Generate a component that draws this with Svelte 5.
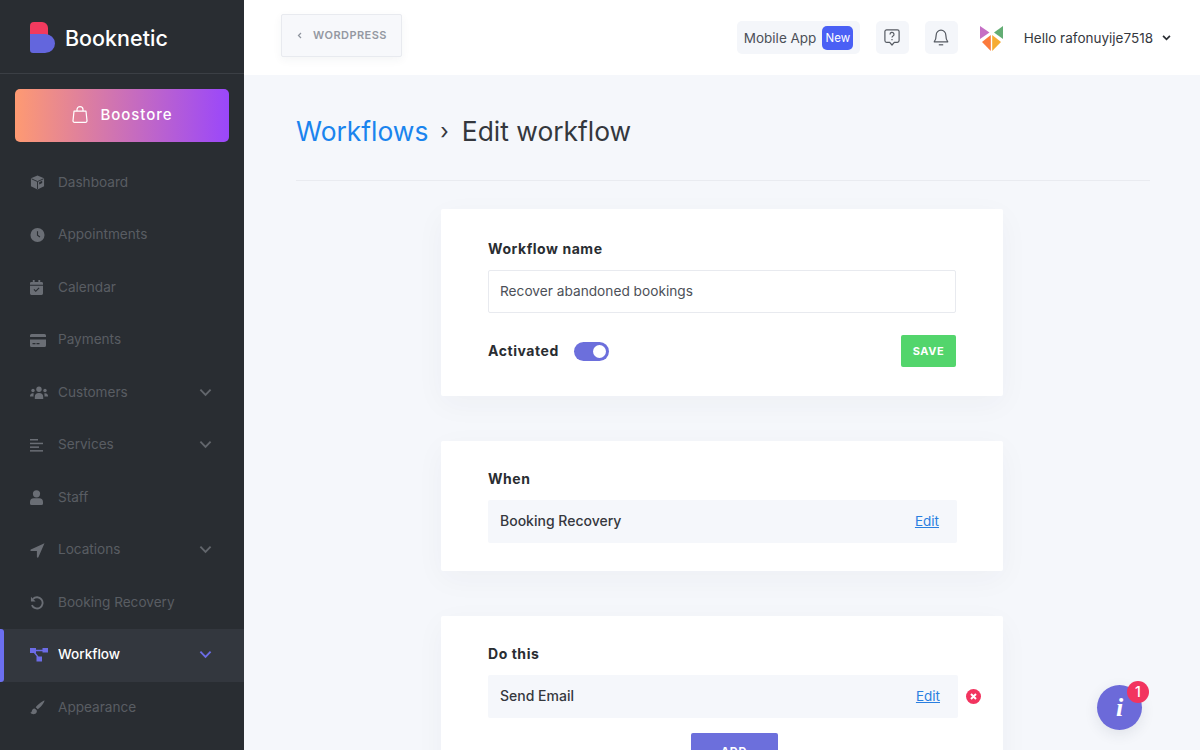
<script>
  const menu = [
    { label: 'Dashboard', icon: 'box' },
    { label: 'Appointments', icon: 'clock' },
    { label: 'Calendar', icon: 'cal' },
    { label: 'Payments', icon: 'card' },
    { label: 'Customers', icon: 'users', more: true },
    { label: 'Services', icon: 'list', more: true },
    { label: 'Staff', icon: 'user' },
    { label: 'Locations', icon: 'nav', more: true },
    { label: 'Booking Recovery', icon: 'undo' },
    { label: 'Workflow', icon: 'flow', more: true, active: true },
    { label: 'Appearance', icon: 'brush' }
  ];
</script>

<div class="page">
  <aside class="side">
    <div class="brand">
      <svg class="logo" viewBox="0 0 25 31" width="25" height="31">
        <path d="M0 4a4 4 0 0 1 4-4h8a6 6 0 0 1 6 6v7H0z" fill="#f23a5e"/>
        <path d="M0 12h15a10 9.500 0 0 1 0 19H3a3 3 0 0 1-3-3z" fill="#6366dd"/>
      </svg>
      <span class="brand-name">Booknetic</span>
    </div>
    <div class="store-wrap">
      <button class="store">
        <svg viewBox="0 0 16 17" width="16" height="17" fill="none" stroke="#fff" stroke-width="1.200">
          <path d="M2 5.200h12l1 9.400a1.600 1.600 0 0 1-1.600 1.800H2.600A1.600 1.600 0 0 1 1 14.600z" stroke-linejoin="round"/>
          <path d="M5 5V3.600a3 3 0 0 1 6 0V5"/>
        </svg>
        <span>Boostore</span>
      </button>
    </div>
    <nav class="menu">
      {#each menu as m}
        <div class="item" class:active={m.active}>
          <span class="ico">
            {#if m.icon === 'box'}
              <svg viewBox="0 0 16 16" width="15" height="15"><path d="M8 .5 15 3.500v8.500L8 15.500 1 12V3.500z" fill="currentColor"/><path d="M1.500 4 8 7l6.500-3M8 7v8" fill="none" stroke="#292d32" stroke-width="1"/><path d="M9.800 7.600 13 6.200v2.400L9.800 10z" fill="#292d32"/></svg>
            {:else if m.icon === 'clock'}
              <svg viewBox="0 0 16 16" width="15" height="15"><circle cx="8" cy="7.500" r="7.500" fill="currentColor"/><path d="M8 3.500v4.300l2.600 1.800" fill="none" stroke="#292d32" stroke-width="1.200"/></svg>
            {:else if m.icon === 'cal'}
              <svg viewBox="0 0 14 16" width="13" height="15"><path fill-rule="evenodd" d="M3 0h2v2h4V0h2v2h1.500A1.500 1.500 0 0 1 14 3.500V5H0V3.500A1.500 1.500 0 0 1 1.500 2H3zM0 6h14v8.500a1.500 1.500 0 0 1-1.500 1.500h-11A1.500 1.500 0 0 1 0 14.500zM3.800 10.500l2.400 2.400 4-4-.9-.9-3.100 3.100-1.500-1.500z" fill="currentColor"/></svg>
            {:else if m.icon === 'card'}
              <svg viewBox="0 0 16 13" width="16" height="13"><path fill-rule="evenodd" d="M1.500 0h13A1.500 1.500 0 0 1 16 1.500V3H0V1.500A1.500 1.500 0 0 1 1.500 0zM0 5.500h16v6A1.500 1.500 0 0 1 14.500 13h-13A1.500 1.500 0 0 1 0 11.500zM2.500 9v1.200h3V9zM6.500 9v1.200h3V9z" fill="currentColor"/></svg>
            {:else if m.icon === 'users'}
              <svg viewBox="0 0 18 13" width="18" height="13"><g fill="currentColor"><circle cx="9" cy="3.200" r="2.700"/><circle cx="3" cy="4.500" r="1.700"/><circle cx="15" cy="4.500" r="1.700"/><path d="M4.800 13v-2a4.200 4 0 0 1 8.400 0v2zM0 10.200a2.800 2.800 0 0 1 3.800-2.800A6 6 0 0 0 3.600 10.600H0zM18 10.200a2.800 2.800 0 0 0-3.800-2.800 6 6 0 0 1 .2 3.200H18z"/></g></svg>
            {:else if m.icon === 'list'}
              <svg viewBox="0 0 13 13" width="13" height="13"><g fill="currentColor"><rect width="8" height="1.500" y="0"/><rect width="13" height="1.500" y="3.700"/><rect width="9" height="1.500" y="7.400"/><rect width="13" height="1.500" y="11.100"/></g></svg>
            {:else if m.icon === 'user'}
              <svg viewBox="0 0 13 15" width="13" height="15"><g fill="currentColor"><circle cx="6.500" cy="3.800" r="3.600"/><path d="M0 13.400V12a3.800 3.800 0 0 1 3.800-3.800h5.400A3.800 3.800 0 0 1 13 12v1.400A1.500 1.500 0 0 1 11.500 15h-10A1.500 1.500 0 0 1 0 13.400z"/></g></svg>
            {:else if m.icon === 'nav'}
              <svg viewBox="0 0 15 15" width="15" height="15"><path d="M14.500.2.800 6.600c-.8.4-.5 1.500.3 1.500h5.800v5.800c0 .8 1.100 1.100 1.500.3z" fill="currentColor"/></svg>
            {:else if m.icon === 'undo'}
              <svg viewBox="0 0 15 15" width="14" height="14" fill="none" stroke="currentColor" stroke-width="2"><path d="M3.200 3.200A6 6 0 1 1 2 9.800"/><path d="M1 .8 1 6h5z" fill="currentColor" stroke="none"/></svg>
            {:else if m.icon === 'flow'}
              <svg viewBox="0 0 18 14" width="18" height="14"><g fill="currentColor"><rect width="6" height="5"/><rect x="12.500" width="5.500" height="4.500"/><rect x="6.500" y="8.500" width="5.500" height="5"/></g><path d="M5 2.500h8M4 4l4 5" stroke="currentColor" stroke-width="1.300" fill="none"/></svg>
            {:else if m.icon === 'brush'}
              <svg viewBox="0 0 15 15" width="15" height="15"><path d="M14.600.4C12 1 7.500 4.500 5.700 7.300l2 2C10.500 7.500 14 3 14.600.4zM4.700 8.400C2.600 8.500 2 10 1.700 11.400c-.2.800-.7 1-1.400 1.200C1.500 14.500 5 15 6.400 12.800c.7-1.100.5-2.200.1-2.700z" fill="currentColor"/></svg>
            {/if}
          </span>
          <span class="label">{m.label}</span>
          {#if m.more}
            <svg class="chev" viewBox="0 0 14 9" width="13" height="9"><path d="M1.500 1.500 7 7l5.500-5.500" fill="none" stroke="currentColor" stroke-width="2"/></svg>
          {/if}
        </div>
      {/each}
    </nav>
  </aside>

  <div class="right">
    <header class="top">
      <button class="back">
        <svg viewBox="0 0 6 8" width="5" height="7"><path d="M4.800 1 1.800 4l3 3" fill="none" stroke="#8f949e" stroke-width="1.500"/></svg>
        <span>WORDPRESS</span>
      </button>
      <div class="top-right">
        <div class="mobile">
          <span>Mobile App</span>
          <span class="new">New</span>
        </div>
        <div class="sq">
          <svg viewBox="0 0 16 17" width="16" height="17" fill="none" stroke="#555a62" stroke-width="1.200"><path d="M2.600.9h10.800a1.700 1.700 0 0 1 1.700 1.700v9a1.700 1.700 0 0 1-1.700 1.700h-3.100L8 16l-2.300-2.700H2.600A1.700 1.700 0 0 1 .9 11.600v-9A1.700 1.700 0 0 1 2.600.9z" stroke-linejoin="round"/><path d="M6 5.400a2 2 0 1 1 3 1.700c-.7.400-1 .8-1 1.500M8 10v1.200"/></svg>
        </div>
        <div class="sq">
          <svg viewBox="0 0 16 17" width="16" height="17" fill="none" stroke="#555a62" stroke-width="1.200"><path d="M8 1.200a4.800 4.800 0 0 1 4.800 4.800c0 4 .8 5.200 2 6.800H1.200c1.200-1.600 2-2.800 2-6.800A4.800 4.800 0 0 1 8 1.200z" stroke-linejoin="round"/><path d="M5.800 15.800h4.400"/></svg>
        </div>
        <svg class="avatar" viewBox="0 0 24 26" width="24" height="26">
          <path d="M0 1 9.500 7.500 0 14z" fill="#c56fc5"/>
          <path d="M23 1V14L14 7.500z" fill="#63ad74"/>
          <path d="M10.800 10 2 17l8.800 9z" fill="#fb7a3c"/>
          <path d="M12.200 10 21 17l-8.800 9z" fill="#f6ac32"/>
        </svg>
        <div class="hello">
          <span>Hello rafonuyije7518</span>
          <svg viewBox="0 0 10 7" width="9" height="6"><path d="M1 1 5 5l4-4" fill="none" stroke="#2a2d33" stroke-width="2"/></svg>
        </div>
      </div>
    </header>

    <main class="main">
      <div class="title">
        <span class="crumb">Workflows</span>
        <span class="sep">›</span>
        <span>Edit workflow</span>
      </div>
      <div class="rule"></div>

      <section class="card first">
        <div class="lab">Workflow name</div>
        <div class="input">Recover abandoned bookings</div>
        <div class="act">
          <span class="lab">Activated</span>
          <span class="toggle"><i></i></span>
          <button class="save">SAVE</button>
        </div>
      </section>

      <section class="card when">
        <div class="lab">When</div>
        <div class="row"><span>Booking Recovery</span><span class="edit">Edit</span></div>
      </section>

      <section class="card dothis">
        <div class="lab">Do this</div>
        <div class="row-wrap">
          <div class="row wide"><span>Send Email</span><span class="edit">Edit</span></div>
          <svg class="del" viewBox="0 0 15 15" width="15" height="15"><circle cx="7.500" cy="7.500" r="7.500" fill="#f2345f"/><path d="M5 5l5 5M10 5l-5 5" stroke="#fff" stroke-width="2"/></svg>
        </div>
        <div class="add-wrap"><button class="add">ADD</button></div>
      </section>
    </main>
  </div>

  <div class="fab">
    <span class="i">i</span>
    <span class="badge">1</span>
  </div>
</div>

<style>
  :global(body) { margin: 0; background: #f5f7fb; }
  .page {
    display: flex; width: 1200px; height: 750px; overflow: hidden; position: relative;
    font-family: Inter, "Noto Sans", sans-serif; color: #292d32;
  }
  .side { width: 244px; flex: none; background: #292d32; }
  .brand {
    height: 73px; border-bottom: 1px solid #3b3f45; display: flex; align-items: center;
    padding-left: 30px; gap: 10px;
  }
  .logo { margin-top: 1px; }
  .brand-name { color: #fff; font-size: 21.500px; font-weight: 500; margin-top: 3px; }
  .store-wrap { padding: 15px 15px 0; }
  .store {
    width: 214px; height: 53px; border: 0; border-radius: 5px; display: flex; align-items: center;
    justify-content: center; gap: 13px; color: #fff; font: 500 15px Inter, sans-serif; letter-spacing: .95px;
    background: linear-gradient(90deg, #fe9a72, #9a47fb); padding: 0 0 2px;
  }
  .menu { padding-top: 14.500px; }
  .item {
    height: 52.500px; display: flex; align-items: center; padding-left: 30px; position: relative;
    font-size: 13.600px;
  }
  .ico { width: 28px; flex: none; display: flex; align-items: center; color: #6a6e75; }
  .label { color: #595d63; margin-bottom: 2px; }
  .chev { position: absolute; left: 199px; top: 21px; color: #62666c; }
  .item.active { background: #33373e; }
  .item.active::before {
    content: ""; position: absolute; left: 0; top: 0; bottom: 0; width: 4px; background: #6c6ff0;
    border-radius: 0 3px 3px 0;
  }
  .item.active .ico, .item.active .chev { color: #6c6ce6; }
  .item.active .label { color: #fff; font-weight: 500; }

  .right { flex: 1; min-width: 0; display: flex; flex-direction: column; }
  .top {
    height: 75px; background: #fff; flex: none; display: flex; align-items: center;
    justify-content: space-between; padding: 0 29px 0 37px;
  }
  .back {
    width: 121px; height: 43px; margin-top: -5px; box-sizing: border-box; background: #f7f8fb;
    border: 1px solid #e8eaef; border-radius: 2px; display: flex; align-items: center; padding: 0 0 0 15px;
    gap: 11px; box-shadow: 0 3px 10px rgba(40, 50, 80, .05);
    color: #9498a2; font: 600 11px Inter, sans-serif; letter-spacing: .45px;
  }
  .top-right { display: flex; align-items: center; }
  .mobile {
    height: 33px; width: 123px; box-sizing: border-box; background: #f4f6fa; border-radius: 5px;
    display: flex; align-items: center; padding-left: 7px; gap: 6px; font-size: 13.500px; color: #4c5058;
  }
  .new {
    background: #4a60f5; color: #fff; font-size: 11.500px; width: 31px; height: 24px; border-radius: 5px;
    display: flex; align-items: center; justify-content: center;
  }
  .sq {
    width: 33px; height: 33px; background: #f4f6fa; border-radius: 5px; margin-left: 16px;
    display: flex; align-items: center; justify-content: center;
  }
  .avatar { margin-left: 22px; }
  .hello {
    margin-left: 20px; display: flex; align-items: center; gap: 9px; font-size: 13.500px; color: #35383e;
  }

  .main { padding: 0 50px 0 52px; flex: 1; min-height: 0; }
  .title { margin-top: 36px; height: 40px; font-size: 26.400px; line-height: 40px; color: #34373d; display: flex; }
  .crumb { color: #1a84ee; }
  .sep { margin: 0 13px 0 12px; font-size: 22px; }
  .rule { height: 1px; background: #e9ebf0; margin-top: 29px; }
  .card {
    width: 562px; box-sizing: border-box; background: #fff; border-radius: 2px;
    padding: 0 47px; box-shadow: 0 8px 30px rgba(40, 50, 80, .04); margin-left: 145px;
  }
  .first { margin-top: 28px; height: 187px; padding-top: 30px; }
  .when { margin-top: 45px; height: 130px; padding-top: 28px; }
  .dothis { margin-top: 45px; height: 200px; padding-top: 28px; }
  .lab { font-size: 14px; font-weight: 700; line-height: 20px; color: #292d32; letter-spacing: .55px; }
  .input {
    width: 468px; height: 43px; box-sizing: border-box; margin-top: 11px; border: 1px solid #e8eaef;
    border-radius: 2px; display: flex; align-items: center; padding: 0 0 2px 11px; font-size: 13.700px; color: #4c5058;
  }
  .act { display: flex; align-items: center; margin-top: 22px; width: 468px; height: 32px; }
  .toggle {
    width: 35px; height: 19px; margin-left: 15px; background: #6c6fdc; border-radius: 10px; display: flex;
    align-items: center; justify-content: flex-end; padding-right: 3px; box-sizing: border-box;
  }
  .toggle i { width: 13px; height: 13px; border-radius: 50%; background: #fff; }
  .save {
    margin-left: auto; width: 55px; height: 32px; background: #53d56c; color: #fff; border: 0; border-radius: 2px;
    font: 700 11px Inter, sans-serif; letter-spacing: .6px; padding: 0;
  }
  .row {
    width: 469px; height: 43px; box-sizing: border-box; background: #f5f7fb; margin-top: 11px; border-radius: 2px;
    display: flex; align-items: center; justify-content: space-between; padding: 0 18px 2px 12px;
    font-size: 14px; font-weight: 500; color: #35383e; flex: none;
  }
  .edit { color: #2a7fe0; text-decoration: underline; font-weight: 400; font-size: 13.500px; }
  .row-wrap { display: flex; align-items: center; gap: 8px; }
  .wide { width: 470px; }
  .del { margin-top: 11px; flex: none; }
  .add-wrap { display: flex; justify-content: center; padding: 15px 0 0 24px; }
  .add {
    width: 87px; height: 36px; background: #6c6fdc; color: #fff; border: 0; border-radius: 2px;
    font: 700 11px Inter, sans-serif; letter-spacing: .6px;
  }
  .fab {
    position: absolute; left: 1097px; top: 685px; width: 45px; height: 45px; border-radius: 50%; background: #6c6ad9;
    display: flex; align-items: center; justify-content: center; box-shadow: 0 4px 14px rgba(40, 50, 80, .1);
  }
  .i { color: #fff; font: italic 700 26px "Liberation Serif", serif; }
  .badge {
    position: absolute; left: 30px; top: -4px; width: 22px; height: 22px; border-radius: 50%; background: #f2345f;
    color: #fff; font: 500 14px/22px Inter, sans-serif; text-align: center;
  }
</style>
